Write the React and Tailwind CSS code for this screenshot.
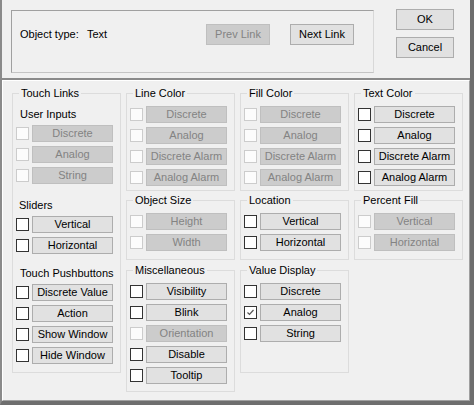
import React from 'react';

const Btn = ({ label, disabled, className = '' }) => (
  <div
    className={`flex items-center justify-center border leading-none ${
      disabled
        ? 'border-[#bfbfbf] bg-[#cccccc] text-[#838383]'
        : 'border-[#adadad] bg-[#e1e1e1] text-black'
    } ${className}`}
  >
    {label}
  </div>
);

const Check = ({ disabled, checked }) => (
  <div
    className={`flex h-[13px] w-[13px] shrink-0 items-center justify-center border ${
      disabled ? 'border-[#cccccc] bg-[#fcfcfc]' : 'border-[#333333] bg-white'
    }`}
  >
    {checked && (
      <svg width="9" height="9" viewBox="0 0 9 9">
        <polyline points="1.5,4.5 3.5,6.5 7.5,2" fill="none" stroke="#555" strokeWidth="1.2" />
      </svg>
    )}
  </div>
);

const Row = ({ label, disabled, checked }) => (
  <div className="flex h-[17px] items-center pl-[3px]">
    <Check disabled={disabled} checked={checked} />
    <Btn label={label} disabled={disabled} className="ml-[3px] h-[17px] w-[81px]" />
  </div>
);

const Group = ({ title, className = '', children }) => (
  <div className={`relative w-[109px] border border-[#dcdcdc] ${className}`}>
    <span className="absolute -top-[7px] left-[6px] bg-[#f0f0f0] px-[2px] leading-[13px]">
      {title}
    </span>
    {children}
  </div>
);

const Rows = ({ items, disabled }) => (
  <div className="flex flex-col gap-[4px] pt-[12px]">
    {items.map((it) => (
      <Row key={it} label={it} disabled={disabled} />
    ))}
  </div>
);

export default function App() {
  return (
    <div
      className="flex h-[405px] w-[474px] flex-col border-b-4 border-l-2 border-r-4 border-b-[#6e6e6e] border-l-[#8a8a8a] border-r-[#6e6e6e] bg-[#f0f0f0] text-[11px] text-black"
      style={{ fontFamily: '"Liberation Sans", Arial, sans-serif' }}
    >
      {/* header */}
      <div className="flex h-[78px] shrink-0">
        <div className="ml-[9px] mt-[10px] h-[63px] w-[363px] border border-t-[#a0a0a0] border-l-[#a0a0a0] border-r-[#d8d8d8] border-b-[#c4c4c4] pl-[8px] pt-[13px]">
          <div className="flex h-[21px] items-center">
            <span className="w-[67px]">Object type:</span>
            <span className="w-[119px]">Text</span>
            <Btn label="Prev Link" disabled className="h-[21px] w-[64px]" />
            <Btn label="Next Link" className="ml-[20px] h-[21px] w-[64px]" />
          </div>
        </div>
        <div className="ml-[22px] mt-[9px] flex flex-col gap-[7px]">
          <Btn label="OK" className="h-[21px] w-[58px]" />
          <Btn label="Cancel" className="h-[21px] w-[58px]" />
        </div>
      </div>
      <div className="h-[2px] shrink-0 bg-[#8a8a8a]" />

      {/* body */}
      <div className="flex flex-1 gap-[5px] border border-b-[#a0a0a0] border-l-white border-r-[#a0a0a0] border-t-white pl-[9px] pt-[12px]">
        {/* column 1 */}
        <Group title="Touch Links" className="h-[280px]">
          <div className="pl-[7px] pt-[14px] leading-[13px]">User Inputs</div>
          <div className="mt-[4px] flex flex-col gap-[4px]">
            {['Discrete', 'Analog', 'String'].map((l) => (
              <Row key={l} label={l} disabled />
            ))}
          </div>
          <div className="mt-[15px] pl-[6px] leading-[13px]">Sliders</div>
          <div className="mt-[4px] flex flex-col gap-[4px]">
            <Row label="Vertical" />
            <Row label="Horizontal" />
          </div>
          <div className="mt-[13px] pl-[7px] leading-[13px]">Touch Pushbuttons</div>
          <div className="mt-[4px] flex flex-col gap-[4px]">
            {['Discrete Value', 'Action', 'Show Window', 'Hide Window'].map((l) => (
              <Row key={l} label={l} />
            ))}
          </div>
        </Group>

        {/* column 2 */}
        <div className="flex flex-col">
          <Group title="Line Color" className="h-[98px]">
            <Rows items={['Discrete', 'Analog', 'Discrete Alarm', 'Analog Alarm']} disabled />
          </Group>
          <Group title="Object Size" className="mt-[9px] h-[60px]">
            <Rows items={['Height', 'Width']} disabled />
          </Group>
          <Group title="Miscellaneous" className="mt-[10px] h-[122px]">
            <div className="flex flex-col gap-[4px] pt-[12px]">
              <Row label="Visibility" />
              <Row label="Blink" />
              <Row label="Orientation" disabled />
              <Row label="Disable" />
              <Row label="Tooltip" />
            </div>
          </Group>
        </div>

        {/* column 3 */}
        <div className="flex flex-col">
          <Group title="Fill Color" className="h-[98px]">
            <Rows items={['Discrete', 'Analog', 'Discrete Alarm', 'Analog Alarm']} disabled />
          </Group>
          <Group title="Location" className="mt-[9px] h-[60px]">
            <Rows items={['Vertical', 'Horizontal']} />
          </Group>
          <Group title="Value Display" className="mt-[10px] h-[103px]">
            <div className="flex flex-col gap-[4px] pt-[12px]">
              <Row label="Discrete" />
              <Row label="Analog" checked />
              <Row label="String" />
            </div>
          </Group>
        </div>

        {/* column 4 */}
        <div className="flex flex-col">
          <Group title="Text Color" className="h-[98px]">
            <Rows items={['Discrete', 'Analog', 'Discrete Alarm', 'Analog Alarm']} />
          </Group>
          <Group title="Percent Fill" className="mt-[9px] h-[60px]">
            <Rows items={['Vertical', 'Horizontal']} disabled />
          </Group>
        </div>
      </div>
    </div>
  );
}
